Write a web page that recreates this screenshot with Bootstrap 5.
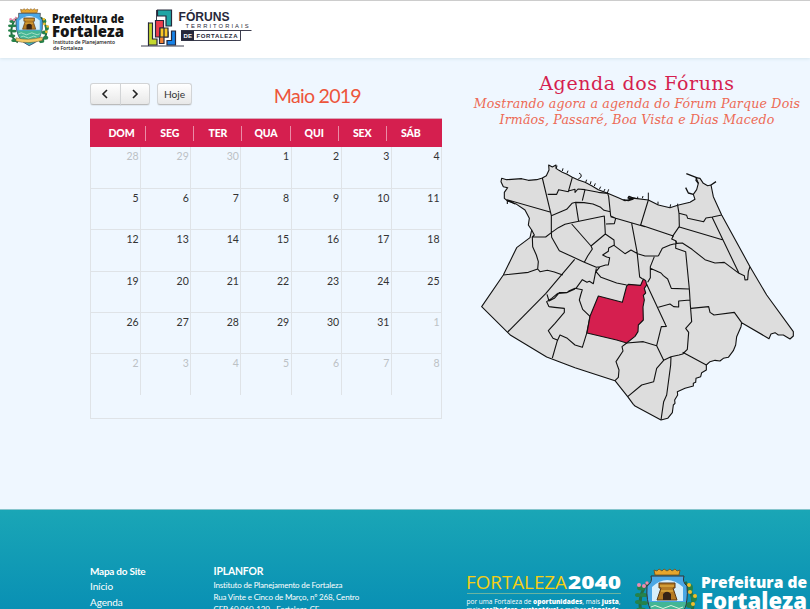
<!DOCTYPE html>
<html lang="pt-BR">
<head>
<meta charset="utf-8">
<title>Fóruns Territoriais de Fortaleza</title>
<link href="https://cdn.jsdelivr.net/npm/bootstrap@5.3.0/dist/css/bootstrap.min.css" rel="stylesheet">
<style>
body{background:#eff7ff;font-family:Lato,sans-serif;height:609px;overflow:hidden}
svg{display:block;flex:none}
.topbar{height:58px;background:#fff;border-top:1px solid #ccc;box-shadow:0 1px 3px #d5e5ee;padding-left:8px}
.agenda-area{height:451px;padding-left:90px}
.cal-pane{width:352px;padding-top:25px}
.cal-tools{height:23px}
.cal-btn{height:22px;padding:0;font-size:10.2px;line-height:20px;color:#333;background:linear-gradient(#fff,#e8e8e8);border:1px solid #d2d4d6;border-bottom-color:#bbb;border-radius:3px;box-shadow:0 1px 1px #0001}
.cal-btn.arrow{width:30.5px}
.cal-btn.today{width:35px;margin-left:7px}
.month-name{color:#ed553b;font-size:19.6px;line-height:26px;margin:0 81px 0 0;font-weight:400;letter-spacing:-.75px}
.cal-head{height:29px;margin-top:12px;background:#d51f4f;padding:0 7px 0 8px;border-top:1px solid #d8a9ba}
.cal-head span{width:48.2px;height:15px;border-right:1px solid #ea8ca6;color:#fff;font-size:10.5px;font-weight:900;line-height:15px;text-align:center;letter-spacing:-.1px}
.cal-head span:last-child{border:0}
.cal-grid{border:1px solid #dfe3e7;border-top:0;height:272px}
.cal-days{display:grid;grid-template-columns:repeat(7,1fr);grid-template-rows:42px;grid-auto-rows:41.3px;margin-right:-1px}
.cal-days div{border-right:1px solid #dfe3e7;border-bottom:1px solid #dfe3e7;text-align:right;font-size:10.5px;line-height:13px;padding:3px 1.5px 0 0;color:#333}
.cal-days div:nth-child(n+36){border-bottom:0}
.cal-days div:nth-child(7n){border-right-color:transparent}
.cal-days .other{color:#bcc1c5}
.map-pane{width:336px;margin-left:29px;padding-top:12px}
.slab{font-family:"DejaVu Serif",serif;text-align:center;white-space:nowrap;margin:0}
h1.slab{font-size:19px;line-height:26px;color:#d51f4f;letter-spacing:.6px;font-weight:400;margin-right:4px}
p.slab{font-size:12.6px;line-height:15.5px;color:#ed6a55;font-style:italic;letter-spacing:.17px;margin-right:4px}
.city-map{margin:28px 0 0 3.5px}
.site-footer{height:100px;background:linear-gradient(#1aa6b6,#0990b4);color:#fff;padding:54px 0 0 90px;border-top:1px solid #86c5cd}
.foot-nav{width:123.5px;font-size:10px;line-height:15.4px;letter-spacing:-.1px}
.foot-nav strong{letter-spacing:-.25px}
.foot-addr{width:251.5px;font-size:8px;line-height:12px;white-space:nowrap;letter-spacing:-.17px}
.foot-addr strong{font-size:10.4px;line-height:15px}
</style>
</head>
<body>
<svg width="0" height="0" class="position-absolute">
<symbol id="crest" viewBox="0 0 62 60">
<path d="M13 14q-8 10-8 22q0 10 10 16M50 14q8 10 8 22q0 10-10 16" fill="none" stroke="#246d43" stroke-width="3"/>
<g fill="#25824a"><ellipse cx="6" cy="20" rx="4" ry="2.5"/><ellipse cx="3" cy="27" rx="3" ry="2"/><ellipse cx="9" cy="27" rx="4" ry="2"/><ellipse cx="3" cy="34" rx="3" ry="2"/><ellipse cx="9" cy="35" rx="4" ry="2"/><ellipse cx="6" cy="42" rx="5" ry="2.5"/><ellipse cx="10" cy="49" rx="5" ry="2.5"/><ellipse cx="55" cy="20" rx="3" ry="4"/><ellipse cx="59" cy="30" rx="3" ry="4"/><ellipse cx="55" cy="37" rx="4" ry="3"/><ellipse cx="57" cy="45" rx="4" ry="3"/><ellipse cx="51" cy="50" rx="4" ry="3"/></g>
<g fill="#ed8bb2"><circle cx="4" cy="17" r="2"/><circle cx="9" cy="18" r="2"/><circle cx="12" cy="15" r="1.7"/></g>
<g fill="#f1bd2c"><circle cx="54" cy="17" r="2"/><circle cx="55" cy="24" r="2"/><circle cx="60" cy="28" r="2"/><circle cx="58" cy="36" r="2"/></g>
<path d="M16 8H49Q47 14 52 18Q55 49 32 57Q10 48 12 18Q18 14 16 8Z" fill="#4aa7e5" stroke="#333" stroke-width="1"/>
<path d="M17 19Q32 5 48 19V33H17Z" fill="#d7effb"/>
<path d="M14 34H51Q49 49 32 55Q16 49 14 34Z" fill="#43b695"/>
<path d="M16 39q4-3 8 0t8 0t8 0t8 0M19 44q4-3 8 0t8 0t8 0" fill="none" stroke="#d9f2db"/>
<path d="M22 32L26 20H24V15H40V20H38L42 32Z" fill="#b57b23" stroke="#5c3a16"/>
<path d="M28 32V26q4-5 8 0v6Z" fill="#372416"/><path d="M25 18H39M26 23H38" stroke="#efc04a"/>
<path d="M20 7L19 2L22 3L24 1L27 3L29 1L32 3L35 1L37 3L40 1L42 3L45 2L44 7Z" fill="#e6a62d" stroke="#744d19" stroke-width=".8"/>
<path d="M12 45Q31 50 52 44V49Q31 55 12 50Z" fill="#f3cb67" stroke="#624f24" stroke-width=".7"/>
</symbol>
</svg>

<header class="topbar d-flex">
<svg width="250" height="56" viewBox="8 1 250 56">
<use href="#crest" x="8" y="8" width="41" height="39.7"/>
<g font-family="Open Sans,sans-serif" fill="#161616">
<text x="52" y="22.500" font-size="11.5" font-weight="800" textLength="72" lengthAdjust="spacingAndGlyphs">Prefeitura de</text>
<text x="52" y="36.500" font-size="16.500" font-weight="800" textLength="72" lengthAdjust="spacingAndGlyphs">Fortaleza</text>
<text x="53" y="43.500" font-size="5.400" font-weight="600" textLength="62" lengthAdjust="spacingAndGlyphs">Instituto de Planejamento</text>
<text x="53" y="49.500" font-size="5.400" font-weight="600" textLength="30" lengthAdjust="spacingAndGlyphs">de Fortaleza</text>
</g>
<g stroke="#27283b" stroke-width="1.2">
<path d="M141 46H184M156.500 10V20M148.500 22.500V46" fill="none" stroke-width=".9"/>
<path d="M157.500 10H171.500V26H166V16H157.500Z" fill="#20a5a5"/>
<path d="M148.500 23H152.500V39H157V45H148.500Z" fill="#c4d82e"/>
<path d="M155.500 20.500H163.500V28H160V37H155.500Z" fill="#ed3d4b"/>
<path d="M159.500 37V43.500H164V37H168V32H160V37Z" fill="#f58232"/>
<path d="M160 28H168V37H160Z" fill="#fbc727"/><path d="M164 28V37"/>
<path d="M171.500 31H175.500V45H167V40.500H171.500Z" fill="#1783e8"/>
</g>
<g font-family="Liberation Sans,sans-serif" font-weight="700" fill="#27283b">
<text x="178.500" y="20.500" font-size="12.2" textLength="51" lengthAdjust="spacingAndGlyphs">FÓRUNS</text>
<text x="185.500" y="27.500" font-size="5.8" font-weight="400" textLength="63">TERRITORIAIS</text>
<path d="M181 30.500H251.500M240.500 30.500V40.500H181" fill="none" stroke="#27283b" stroke-width=".9"/>
<path d="M181 30.500H194V40.500H181Z"/>
<text x="183.500" y="37.800" font-size="6" fill="#fff" textLength="8.500">DE</text>
<text x="196.500" y="37.800" font-size="6" textLength="41">FORTALEZA</text>
</g>
</svg>
</header>

<main class="agenda-area d-flex">
<section class="cal-pane">
<div class="cal-tools d-flex">
<div class="btn-group">
<button class="btn cal-btn arrow d-flex align-items-center justify-content-center" aria-label="Anterior"><svg width="8" height="10"><path d="M6 1L2 5L6 9" fill="none" stroke="#222" stroke-width="1.6"/></svg></button>
<button class="btn cal-btn arrow d-flex align-items-center justify-content-center" aria-label="Próximo"><svg width="8" height="10"><path d="M2 1L6 5L2 9" fill="none" stroke="#222" stroke-width="1.6"/></svg></button>
</div>
<button class="btn cal-btn today">Hoje</button>
<h2 class="month-name ms-auto">Maio 2019</h2>
</div>
<div class="cal-head d-flex align-items-center"><span>DOM</span><span>SEG</span><span>TER</span><span>QUA</span><span>QUI</span><span>SEX</span><span>SÁB</span></div>
<div class="cal-grid"><div class="cal-days">
<div class="other">28</div><div class="other">29</div><div class="other">30</div><div>1</div><div>2</div><div>3</div><div>4</div>
<div>5</div><div>6</div><div>7</div><div>8</div><div>9</div><div>10</div><div>11</div>
<div>12</div><div>13</div><div>14</div><div>15</div><div>16</div><div>17</div><div>18</div>
<div>19</div><div>20</div><div>21</div><div>22</div><div>23</div><div>24</div><div>25</div>
<div>26</div><div>27</div><div>28</div><div>29</div><div>30</div><div>31</div><div class="other">1</div>
<div class="other">2</div><div class="other">3</div><div class="other">4</div><div class="other">5</div><div class="other">6</div><div class="other">7</div><div class="other">8</div>
</div></div>
</section>

<section class="map-pane">
<h1 class="slab">Agenda dos Fóruns</h1>
<p class="slab">Mostrando agora a agenda do Fórum Parque Dois<br>Irmãos, Passaré, Boa Vista e Dias Macedo</p>
<svg class="city-map" width="325" height="270" viewBox="0 0 975 810">
<g fill="#ddd" stroke="#111" stroke-width="3.300" stroke-linejoin="round">
<path d="M80 70L95 74L140 71L160 76L185 74L202 69L214 62L222 45L221 30L232 36L243 30V40L252 46L262 52L276 58L292 67L310 75L330 82L350 92L370 104L398 115L430 128L450 137L470 132L480 130L520 135L550 150L585 158L608 151L645 142L660 133L655 118L665 104L670 85L663 68L675 70L685 85L698 92L708 90L715 125L740 180L825 335L875 420L955 530V543L945 552L925 540L910 540L900 533L888 537L882 551L800 503L798 515L785 545L782 570L775 587L760 607L745 610L735 618L720 616L705 620L694 630V645L680 653L677 665L663 670L662 682L655 685V693L630 700L607 710L608 720L599 735L600 745L595 750L592 773L578 790L558 795L480 753L475 748L458 725L420 677L300 638L215 606L107 541L20 455L85 360L125 278L165 248L170 225L160 210L163 190L150 165L125 148L98 138L88 130V112L98 98L85 95L78 80Z"/>
<g fill="none">
<path d="M202 69L229 182V232L230 247L253 287L328 322L364 337L375 335M95 134L225 171M97 137V147M120 147L98 135M170 225L178 240L172 246H212L230 232L250 218L270 208L290 203L388 183L391 237L348 273L352 282L338 303L328 322M290 207L348 273M229 182L275 163L291 145L302 142L327 143L354 147L377 157L387 166L406 170M302 142L311 200M218 118H245L251 104L280 110L292 67M280 108L300 103V112L309 102L330 104L370 112L398 115L401 125L407 183L422 190L510 215M330 104L322 137M407 185L422 190L418 206L393 207M391 237L417 255L418 272L450 296L468 285L488 296L510 303L550 303M418 270L401 279L400 289L383 300L395 306L404 308L400 330H392L375 335L363 350L378 367L425 384L455 390M364 340L355 386L343 379L336 382L322 374L303 400M470 205L486 290L494 366L503 372M520 135L497 210L595 243L590 252L602 257L605 263"/>
<path d="M172 246L173 275L184 300L190 320L188 342L160 352L85 360M188 342L195 350L217 346L238 351L263 360M299 313L212 416L98 531M248 415L230 430L215 440L222 455M248 415L275 414L283 407L300 400L322 404L317 420L313 435L323 463L345 484L335 535L322 577L300 570L277 550L255 540L247 557L232 609M216 418L222 438L238 430L253 413L278 412L300 402M222 455L239 457L268 460V472L240 505L220 527L234 550L247 555"/>
<path d="M608 151L612 175L613 214L592 245M612 175L635 181L638 190L686 200L693 189L712 186L740 180M613 216L742 254M711 186L792 355M605 265L622 264L651 283L690 314L720 324L748 322L792 355L808 362L810 375L818 374L820 350L825 335M603 257L602 280L632 290L643 402L646 450L650 500L632 520L641 532L637 583L623 597L612 600L588 605L566 616L545 572M605 265L585 270L562 280L550 303M538 305L526 335L526 368L518 382M526 340L558 354L565 362L578 372L589 400L642 402M550 457L585 447L596 455L611 456V438L645 435M648 460L701 455L705 472L717 480L778 472L800 503M515 388L572 510L574 514L559 515L545 572M566 616L545 640L536 680L500 690L458 725M455 564L505 560L545 572M455 564L441 575L444 588L423 620L432 645L430 667L420 677M588 605L587 630L575 720L566 740L558 795M623 592L694 630"/>
</g>
<path d="M455 393L460 388L497 391L505 372L512 377L515 390L508 400L512 414L505 421L508 435L504 456L505 495L490 510L489 530L480 544L455 564L425 555L336 534L345 484L370 423L442 442Z" fill="#d51f4f"/>
<g fill="none" stroke-width="4"><path d="M670 85L663 76L665 68L634 56M655 118L640 114L632 98M708 90L723 80"/><path stroke-width="3" d="M312 54q10 4 6 12l-9 7M244 40l2-8M262 48l2-8M276 55l3-8M332 82l3-8M346 87l2-8M358 93l3-8M373 103l4-8M386 110l4-8M397 114l4-11M520 135V113M502 130l2-7M488 132v-7M549 149v-9M585 157l2-9M608 151v-5"/><path d="M445 134l15 3 14-5-15-3 3-5 8 3 11 3"/></g>
</g>
</svg>
</section>
</main>

<footer class="site-footer d-flex">
<nav class="foot-nav"><strong>Mapa do Site</strong><br>Início<br>Agenda</nav>
<address class="foot-addr m-0"><strong>IPLANFOR</strong><br>Instituto de Planejamento de Fortaleza<br>Rua Vinte e Cinco de Março, nº 268, Centro<br>CEP 60.060-120 - Fortaleza-CE</address>
<svg width="345" height="45" viewBox="465 564 345 45">
<g font-family="Open Sans,sans-serif" fill="#fff">
<text x="466" y="588.500" font-size="18" fill="#f6cf12" textLength="101" lengthAdjust="spacingAndGlyphs">FORTALEZA</text>
<text x="568" y="588.500" font-size="18" font-weight="800" textLength="53" lengthAdjust="spacingAndGlyphs">2040</text>
<path d="M467 593.500H621" stroke="#82bd9a" stroke-width=".8"/>
<text x="466.500" y="603.800" font-size="6.500" textLength="154" lengthAdjust="spacingAndGlyphs">por uma Fortaleza de <tspan font-weight="800">oportunidades</tspan>, mais <tspan font-weight="800">justa</tspan>,</text>
<text x="466.500" y="611.500" font-size="6.500" textLength="154" lengthAdjust="spacingAndGlyphs">mais <tspan font-weight="800">acolhedora</tspan>, <tspan font-weight="800">sustentável</tspan> e melhor <tspan font-weight="800">planejada</tspan>.</text>
<use href="#crest" x="635" y="568" width="62" height="60"/>
<text x="701" y="587.500" font-size="15.500" font-weight="800" textLength="106" lengthAdjust="spacingAndGlyphs">Prefeitura de</text>
<text x="701" y="608.500" font-size="23" font-weight="800" textLength="106" lengthAdjust="spacingAndGlyphs">Fortaleza</text>
</g>
</svg>
</footer>
<script src="https://cdn.jsdelivr.net/npm/bootstrap@5.3.0/dist/js/bootstrap.bundle.min.js"></script>
</body>
</html>
